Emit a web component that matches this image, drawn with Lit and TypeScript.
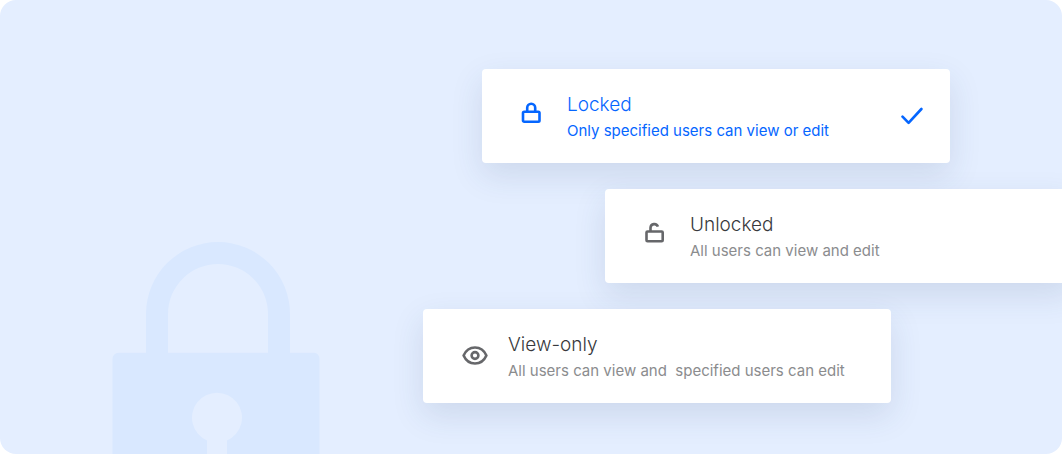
import { LitElement, html, css, svg, nothing } from "lit";
import { customElement, property, state } from "lit/decorators.js";
import { classMap } from "lit/directives/class-map.js";

type Access = "locked" | "unlocked" | "view-only";

const icons = {
  locked: svg`
    <rect x="2" y="8.800" width="16.500" height="9.900" rx="1.200" />
    <path d="M6.200 8.800V4.800a4 4 0 0 1 8 0v4" />`,
  unlocked: svg`
    <rect x="2.500" y="8.500" width="16.200" height="9.800" rx="1" />
    <path d="M6.500 8.500V4.700a3.800 3.800 0 0 1 7.400 -1" />`,
  "view-only": svg`
    <path d="M1.600 12.500C3.800 7.500 8 4.500 13 4.500S22.200 7.500 24.400 12.500C22.200 17.500 18 20.500 13 20.500S3.800 17.500 1.600 12.500Z" />
    <circle cx="13" cy="12.500" r="3.400" />`,
};

const options: { id: Access; title: string; detail: string }[] = [
  { id: "locked", title: "Locked", detail: "Only specified users can view or edit" },
  { id: "unlocked", title: "Unlocked", detail: "All users can view and edit" },
  { id: "view-only", title: "View-only", detail: "All users can view and \u00a0specified users can edit" },
];

@customElement("access-option")
export class AccessOption extends LitElement {
  @property() kind: Access = "locked";
  @property() heading = "";
  @property() detail = "";
  @property({ type: Boolean }) selected = false;

  static styles = css`
    :host {
      display: block;
    }
    .card {
      display: flex;
      align-items: center;
      box-sizing: border-box;
      padding: 19px 27px 19px 39px;
      border-radius: 4px;
      background: #fff;
      box-shadow: 0 12px 32px rgba(50, 70, 105, 0.13);
      color: #38393c;
      cursor: pointer;
    }
    .radio {
      appearance: none;
      width: 0;
      height: 0;
      margin: 0;
      outline: none;
    }
    .card:focus-within:has(:focus-visible) {
      outline: 2px solid #0566ff;
    }
    .icon {
      flex: none;
      width: 26px;
      height: 26px;
      margin-right: 20px;
      overflow: visible;
      fill: none;
      stroke: #66676a;
      stroke-width: 2.6;
      stroke-linejoin: round;
      stroke-linecap: butt;
    }
    .text {
      flex: 1;
      display: flex;
      flex-direction: column;
      padding-top: 3px;
      white-space: nowrap;
    }
    .title {
      font-size: 19px;
      font-weight: 300;
      line-height: 27px;
    }
    .detail {
      font-size: 15px;
      line-height: 26px;
      color: #8b8c8e;
    }
    .check {
      flex: none;
      width: 22px;
      height: 18px;
      fill: none;
      stroke: #0566ff;
      stroke-width: 2.6;
      stroke-linecap: round;
      stroke-linejoin: round;
    }
    .selected,
    .selected .detail {
      color: #0566ff;
    }
    .selected .icon {
      stroke: #0566ff;
    }
  `;

  private choose() {
    this.dispatchEvent(new CustomEvent("choose", { detail: this.kind }));
  }

  render() {
    return html`
      <label class=${classMap({ card: true, selected: this.selected })}>
        <input
          class="radio"
          type="radio"
          name="access"
          .checked=${this.selected}
          @change=${this.choose}
        />
        <svg class="icon" viewBox="0 0 26 26" aria-hidden="true">${icons[this.kind]}</svg>
        <span class="text">
          <span class="title">${this.heading}</span>
          <span class="detail">${this.detail}</span>
        </span>
        ${this.selected
          ? html`<svg class="check" viewBox="0 0 22 18" aria-hidden="true">
              <path d="M1.500 9.600L7.600 15.900L20.400 2" />
            </svg>`
          : nothing}
      </label>
    `;
  }
}

@customElement("app-root")
export class AppRoot extends LitElement {
  @state() private access: Access = "locked";

  static styles = css`
    :host {
      display: block;
      background: #fff;
      font-family: Inter, sans-serif;
    }
    .panel {
      display: grid;
      grid-template-columns: minmax(0, 1fr) minmax(0, 639px);
      overflow: hidden;
      border-radius: 16px;
      background: #e4eeff;
    }
    .art {
      display: flex;
      align-items: flex-end;
      padding-left: 112px;
    }
    .padlock {
      display: block;
      width: 208px;
      height: 212px;
      fill: #d9e8ff;
    }
    .options {
      display: flex;
      flex-direction: column;
      gap: 26px;
      padding: 69px 0 51px;
    }
    .option {
      width: 468px;
    }
    .locked {
      margin-left: 59px;
    }
    .unlocked {
      margin-left: 182px;
    }
  `;

  render() {
    return html`
      <main class="panel">
        <div class="art">
          <svg class="padlock" viewBox="0 0 208 212" aria-hidden="true">
            <path d="M34 111V72a72 72 0 0 1 144 0v39h-22V72a50 50 0 0 0 -100 0v39z" />
            <path
              d="M6.500 110.700H202a6 6 0 0 1 5.500 6V212H115V198.600a25 25 0 1 0 -20 0V212H.5V116.700a6 6 0 0 1 6 -6z"
            />
          </svg>
        </div>
        <div class="options" role="radiogroup" aria-label="Access">
          ${options.map(
            (o) => html`<access-option
              class="option ${o.id}"
              .kind=${o.id}
              .heading=${o.title}
              .detail=${o.detail}
              .selected=${this.access === o.id}
              @choose=${(e: CustomEvent<Access>) => (this.access = e.detail)}
            ></access-option>`
          )}
        </div>
      </main>
    `;
  }
}
